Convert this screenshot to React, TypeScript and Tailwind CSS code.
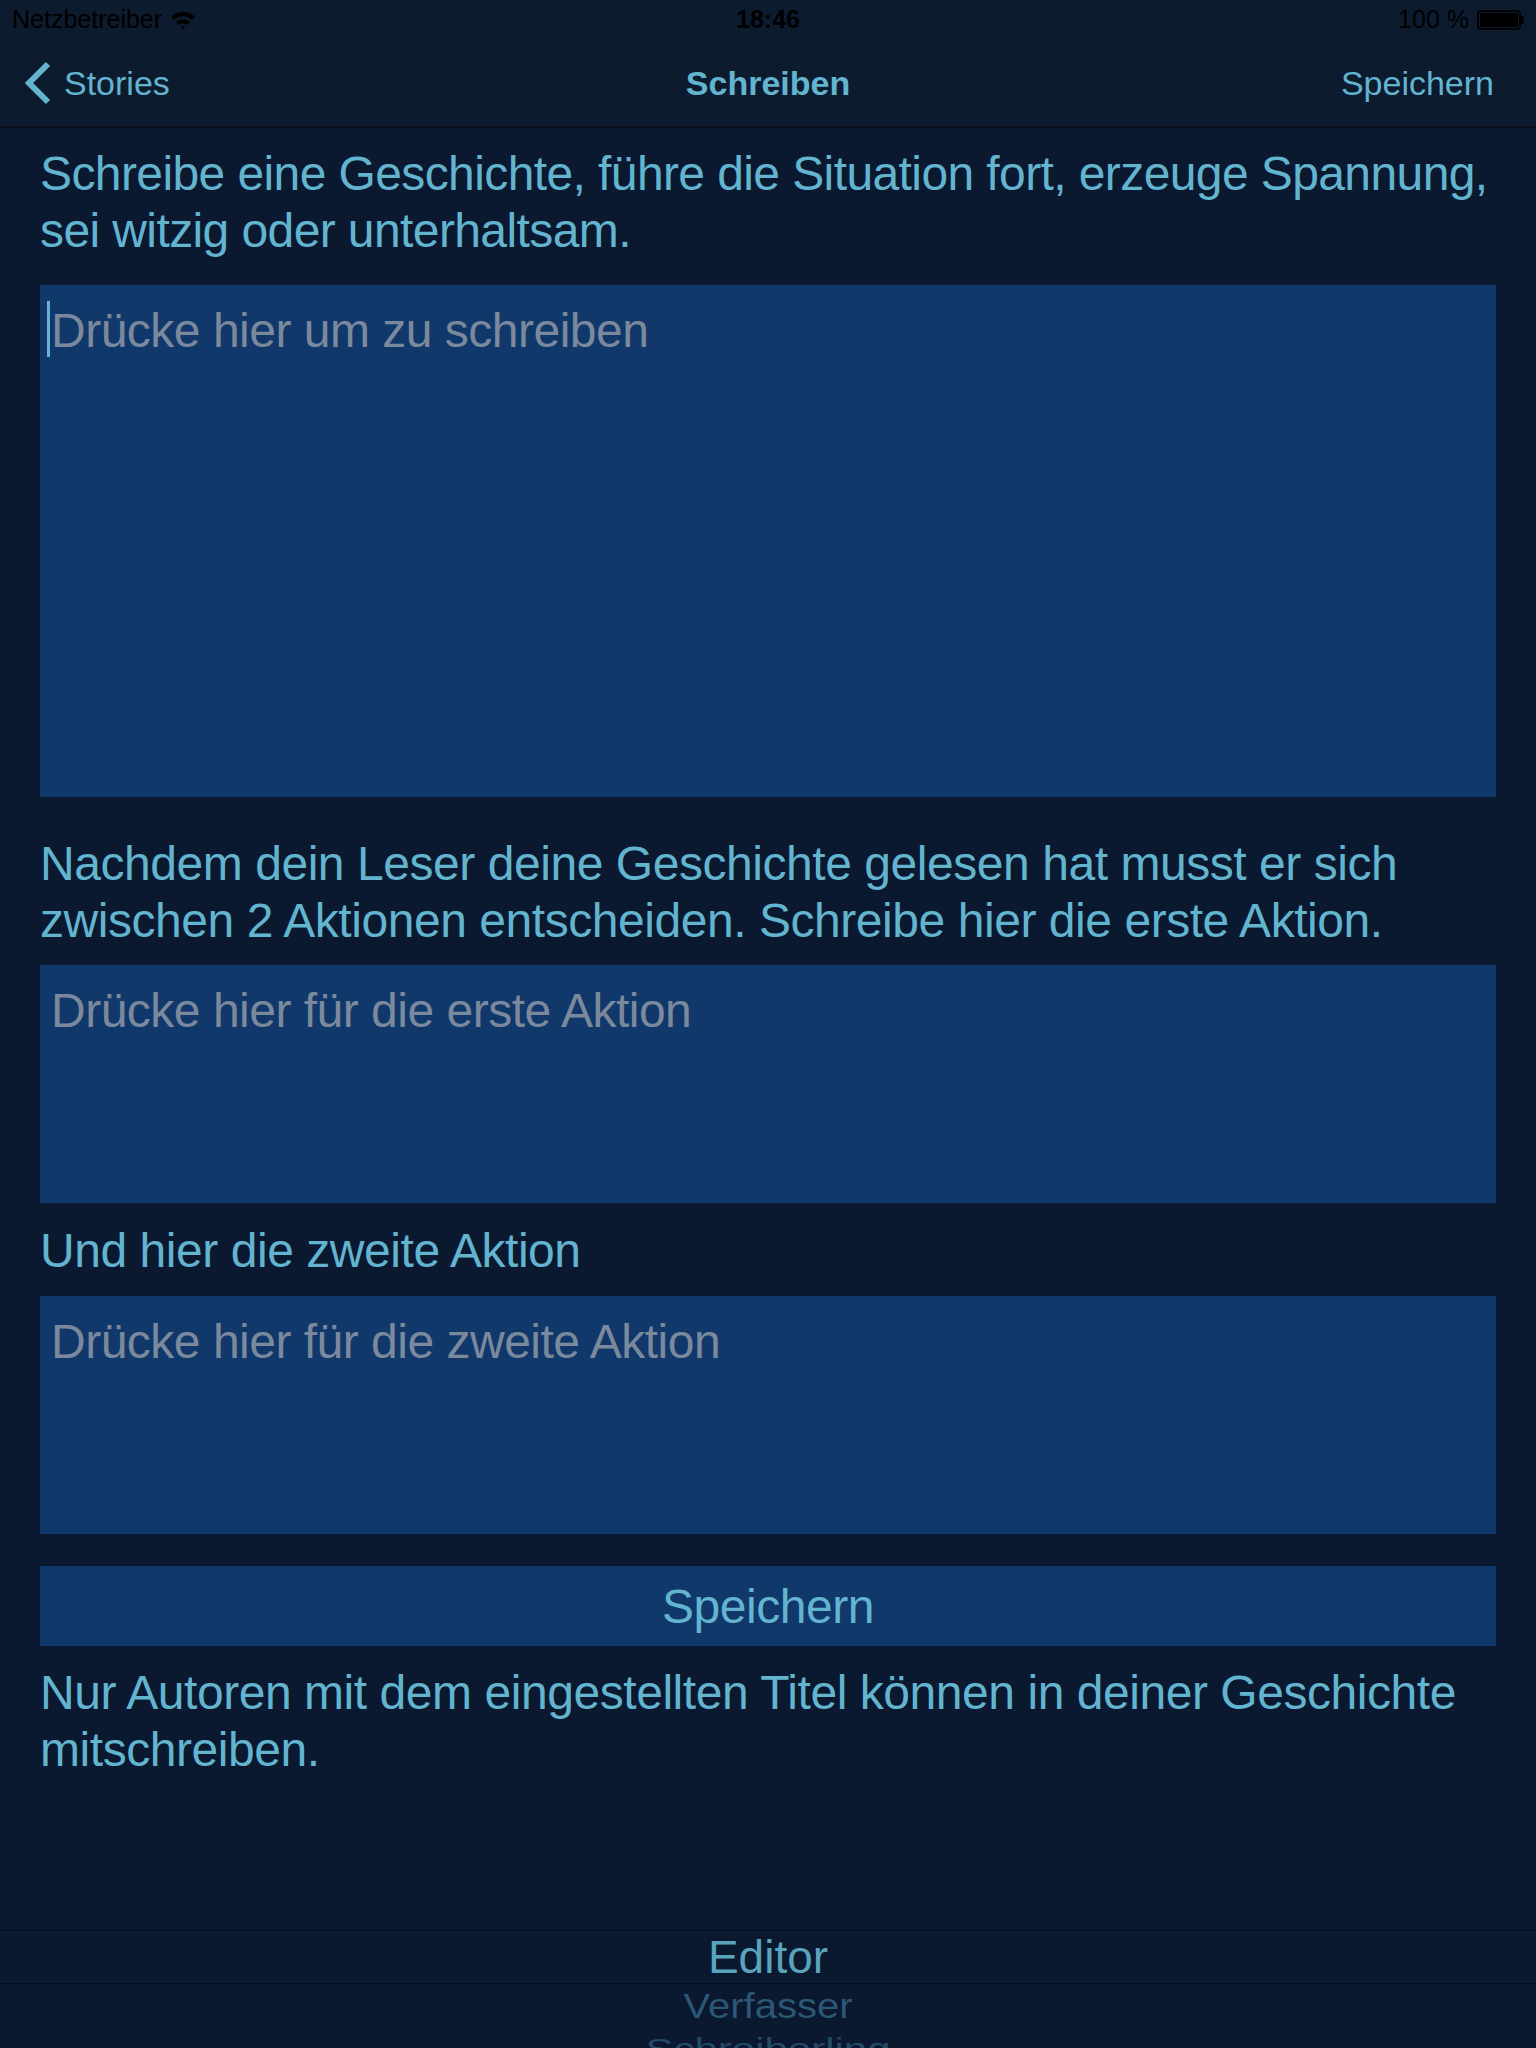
import React from "react";

const font = { fontFamily: '"Liberation Sans", Arial, sans-serif' };

const StatusBar: React.FC = () => (
  <div className="h-[40px] shrink-0 flex items-center justify-between px-[12px] bg-[#0d1b2f] text-black text-[25px] relative">
    <div className="flex items-center gap-[8px]">
      <span>Netzbetreiber</span>
      <svg width="26" height="20" viewBox="0 0 26 20">
        <path d="M1 7 A17 17 0 0 1 25 7 L22 10 A12.5 12.5 0 0 0 4 10 Z" fill="#000" />
        <path d="M6 12 A10 10 0 0 1 20 12 L17 15 A5.5 5.5 0 0 0 9 15 Z" fill="#000" />
        <path d="M11 17 L13 19.5 L15 17 A3 3 0 0 0 11 17 Z" fill="#000" />
      </svg>
    </div>
    <span className="absolute left-1/2 -translate-x-1/2 font-bold">18:46</span>
    <div className="flex items-center gap-[8px]">
      <span>100 %</span>
      <div className="flex items-center">
        <div className="w-[44px] h-[20px] border-[2px] border-black rounded-[4px] p-[1px]">
          <div className="w-full h-full bg-black rounded-[2px]" />
        </div>
        <div className="w-[3px] h-[8px] bg-black rounded-r-[2px]" />
      </div>
    </div>
  </div>
);

const NavBar: React.FC = () => (
  <div className="h-[88px] shrink-0 flex items-center justify-between bg-[#0d1b2f] border-b-[2px] border-[#070f1b] px-[24px] relative text-[#62b4cf] text-[34px]">
    <div className="flex items-center gap-[12px]">
      <svg width="28" height="44" viewBox="0 0 28 44">
        <path d="M24 3 L5 22 L24 41" fill="none" stroke="#62b4cf" strokeWidth="6" strokeLinejoin="miter" />
      </svg>
      <span>Stories</span>
    </div>
    <span className="absolute left-1/2 -translate-x-1/2 font-bold">Schreiben</span>
    <span className="pr-[18px]">Speichern</span>
  </div>
);

const InputBox: React.FC<{ placeholder: string; height: string; cursor?: boolean }> = ({
  placeholder,
  height,
  cursor,
}) => (
  <div className={`bg-[#10386b] ${height} px-[11px] pt-[17px] relative`}>
    {cursor && <div className="absolute left-[7px] top-[16px] w-[3px] h-[56px] bg-[#62b4cf]" />}
    <div className="text-[#7b899d] text-[48px] leading-[57px] tracking-[-0.5px]">{placeholder}</div>
  </div>
);

export default function App() {
  return (
    <div className="w-[1536px] h-[2048px] overflow-hidden bg-[#0a1830] flex flex-col" style={font}>
      <StatusBar />
      <NavBar />

      <div className="shrink-0 px-[40px] flex flex-col text-[#62b4cf] text-[48px] leading-[57px] tracking-[-0.45px]">
        <p className="mt-[17px] tracking-[-0.6px] whitespace-nowrap">
          Schreibe eine Geschichte, führe die Situation fort, erzeuge Spannung,
          <br />
          sei witzig oder unterhaltsam.
        </p>
        <div className="mt-[26px]">
          <InputBox placeholder="Drücke hier um zu schreiben" height="h-[512px]" cursor />
        </div>

        <p className="mt-[38px]">
          Nachdem dein Leser deine Geschichte gelesen hat musst er sich zwischen 2 Aktionen entscheiden. Schreibe hier
          die erste Aktion.
        </p>
        <div className="mt-[16px]">
          <InputBox placeholder="Drücke hier für die erste Aktion" height="h-[238px]" />
        </div>

        <p className="mt-[19px]">Und hier die zweite Aktion</p>
        <div className="mt-[17px]">
          <InputBox placeholder="Drücke hier für die zweite Aktion" height="h-[238px]" />
        </div>

        <button className="mt-[32px] h-[80px] bg-[#10386b] text-[#62b4cf] text-[48px] flex items-center justify-center">
          Speichern
        </button>

        <p className="mt-[18px]">
          Nur Autoren mit dem eingestellten Titel können in deiner Geschichte mitschreiben.
        </p>
      </div>

      {/* Picker */}
      <div className="shrink-0 mt-[152px] flex flex-col items-center">
        <div className="w-full h-[54px] border-y-[1px] border-[#050c17] flex items-center justify-center text-[46px] text-[#5aa3bd]">
          Editor
        </div>
        <div className="h-[44px] flex items-center justify-center text-[40px] text-[#2c5776] scale-y-[0.88]">
          Verfasser
        </div>
        <div className="h-[40px] flex items-center justify-center text-[42px] text-[#234a66] scale-y-[0.7]">
          Schreiberling
        </div>
      </div>
    </div>
  );
}
